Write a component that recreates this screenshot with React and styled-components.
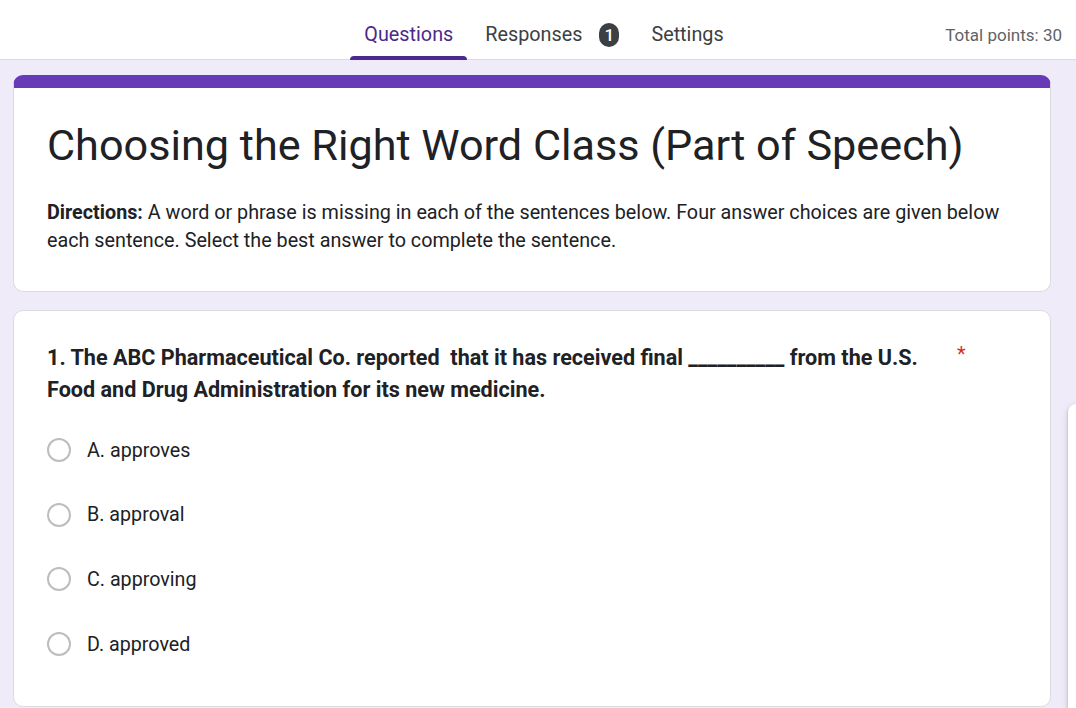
import React from 'react';
import styled, { createGlobalStyle } from 'styled-components';

const GlobalStyle = createGlobalStyle`
  html, body {
    margin: 0;
    padding: 0;
    background: #f0ebf8;
    overflow: hidden;
    font-family: Roboto, "Liberation Sans", Arial, sans-serif;
    color: #202124;
  }
`

const Page = styled.div`
  min-height: 708px;
  background: #f0ebf8;
`

const Header = styled.header`
  height: 60px;
  box-sizing: border-box;
  padding-top: 10px;
  background: #fff;
  border-bottom: 1px solid #dadce0;
  display: grid;
  grid-template-columns: 1fr auto 1fr;
  align-items: stretch;
`

const Tabs = styled.nav`
  display: flex;
  align-items: stretch;
  gap: 4px;
  grid-column: 2;
  margin-left: 12px;
`

const Tab = styled.div`
  position: relative;
  display: flex;
  align-items: center;
  gap: 17px;
  padding: 0 14px;
  font-size: 19.8px;
  color: ${p => (p.active ? '#4a2a8a' : '#3c4043')};

  &::after {
    content: '';
    display: ${p => (p.active ? 'block' : 'none')};
    position: absolute;
    left: 0;
    right: 0;
    bottom: -1px;
    height: 4px;
    border-radius: 4px 4px 0 0;
    background: #4a2a8a;
  }
`

const Badge = styled.span`
  display: inline-flex;
  align-items: center;
  justify-content: center;
  width: 20px;
  height: 24px;
  border-radius: 10px;
  background: #3c4043;
  color: #fff;
  font-size: 17px;
  font-weight: 500;
`

const Points = styled.div`
  grid-column: 3;
  justify-self: end;
  align-self: center;
  padding-right: 14px;
  font-size: 17px;
  color: #5f6368;
`

const Main = styled.main`
  display: flex;
  align-items: flex-start;
  gap: 17px;
  padding: 15px 0 0 13px;
`

const Column = styled.div`
  flex: 0 0 1038px;
  display: flex;
  flex-direction: column;
  gap: 18px;
`

const Card = styled.section`
  background: #fff;
  border: 1px solid #dadce0;
  border-radius: 10px;
  border-top: ${p => (p.accent ? '13px solid #673ab7' : '1px solid #dadce0')};
  padding: ${p => p.pad};
`

const Title = styled.h1`
  margin: 0;
  font-size: 43.2px;
  font-weight: 400;
  line-height: 56px;
  color: #202124;
`

const Description = styled.p`
  margin: 25px 0 0;
  font-size: 19.75px;
  line-height: 28px;
  color: #202124;

  b {
    font-weight: 700;
  }
`

const QuestionRow = styled.div`
  display: flex;
  align-items: flex-start;
`

const QuestionText = styled.div`
  flex: 0 1 900px;
  font-size: 21.6px;
  font-weight: 700;
  line-height: 32px;
  color: #202124;
`

const Required = styled.span`
  margin-left: 10px;
  font-size: 20px;
  line-height: 24px;
  color: #d93025;
`

const Options = styled.div`
  margin-top: 12px;
  display: flex;
  flex-direction: column;
`

const Option = styled.label`
  height: 64.6px;
  display: flex;
  align-items: center;
  gap: 16px;
  font-size: 19.7px;
  color: #202124;
`

const Radio = styled.span`
  width: 24px;
  height: 24px;
  box-sizing: border-box;
  border: 2px solid #bdbdbd;
  border-radius: 50%;
  flex: 0 0 auto;
`

const SidePanel = styled.aside`
  flex: 0 0 56px;
  height: 320px;
  margin-top: 329px;
  background: #fff;
  border-radius: 8px;
  box-shadow: 0 1px 3px rgba(60, 64, 67, 0.3), 0 4px 8px rgba(60, 64, 67, 0.15);
`

const choices = ['A. approves', 'B. approval', 'C. approving', 'D. approved'];

export default function App() {
  return (
    <Page>
      <GlobalStyle />
      <Header>
        <Tabs>
          <Tab active>Questions</Tab>
          <Tab>
            Responses
            <Badge>1</Badge>
          </Tab>
          <Tab>Settings</Tab>
        </Tabs>
        <Points>Total points: 30</Points>
      </Header>
      <Main>
        <Column>
          <Card accent pad="30px 33px 36px">
            <Title>Choosing the Right Word Class (Part of Speech)</Title>
            <Description>
              <b>Directions:</b> A word or phrase is missing in each of the sentences below. Four answer choices are given below each sentence. Select the best answer to complete the sentence.
            </Description>
          </Card>
          <Card pad="31px 33px 30px">
            <QuestionRow>
              <QuestionText>
                1. The ABC Pharmaceutical Co. reported&nbsp; that it has received final __________ from the U.S. Food and Drug Administration for its new medicine.
              </QuestionText>
              <Required>*</Required>
            </QuestionRow>
            <Options>
              {choices.map(c => (
                <Option key={c}>
                  <Radio />
                  {c}
                </Option>
              ))}
            </Options>
          </Card>
        </Column>
        <SidePanel />
      </Main>
    </Page>
  );
}
